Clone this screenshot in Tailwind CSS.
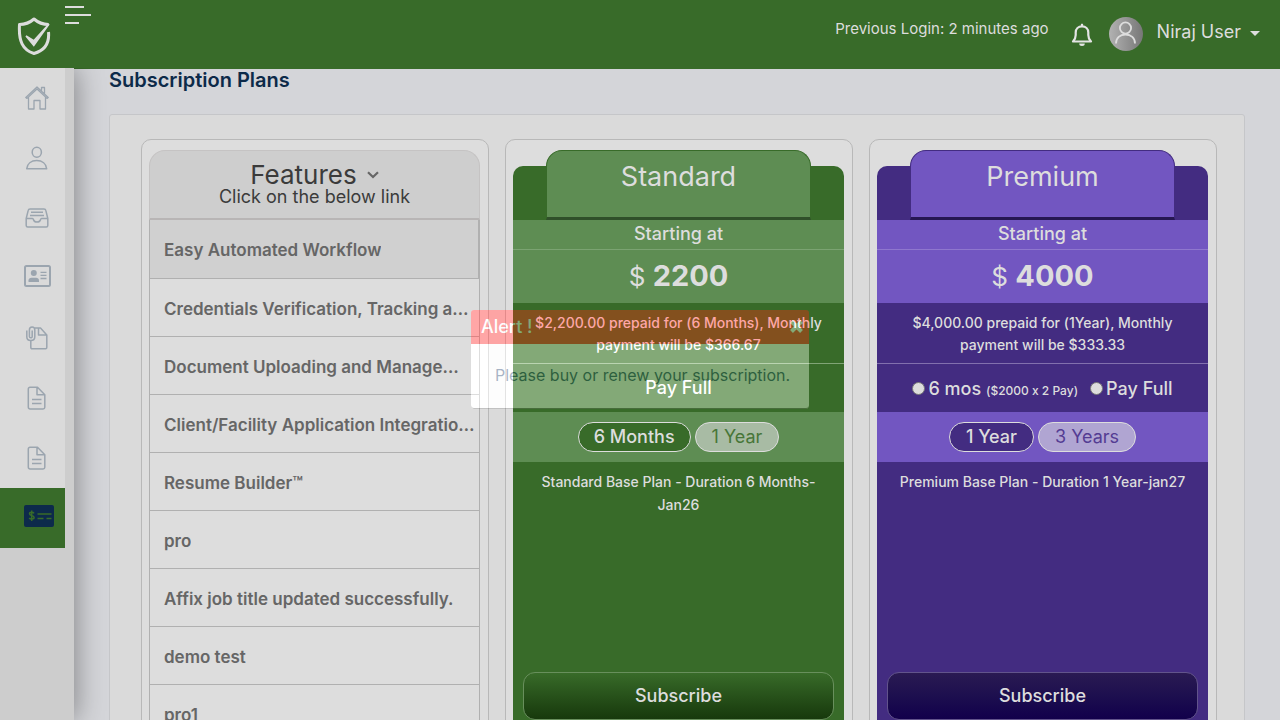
<!DOCTYPE html>
<html lang="en">
<head>
<meta charset="utf-8">
<meta name="viewport" content="width=device-width, initial-scale=1">
<title>Subscription Plans</title>
<script src="https://cdn.jsdelivr.net/npm/@tailwindcss/browser@4"></script>
</head>
<body class="h-screen overflow-hidden bg-[#d4d5d9] font-['Inter','Liberation_Sans',sans-serif] text-[#dddddd] [font-feature-settings:'calt'_0]">
<div class="flex h-full flex-col">

  <header class="flex h-[69px] shrink-0 items-start bg-[#386b29]">
    <a href="#" aria-label="Home" class="w-[65px] shrink-0 pl-[17px] pt-4">
      <svg class="h-10 w-[34px]" viewBox="0 0 34 40" fill="none" stroke="#dddddd">
        <path d="M31.500 16C32.500 27 28 34.500 17 37.500 5.500 34 1.500 25 2.500 8.500 9 8.500 13 6.500 17 3c4 3.500 8.500 5.500 14.500 5.500" stroke-width="3" stroke-linejoin="round"/>
        <path d="M9 20l7.800 9.500L32 8 16.800 24.800z" fill="#dddddd" stroke-width="1.600"/>
      </svg>
    </a>
    <button type="button" aria-label="Toggle menu" class="flex flex-col gap-1.5 pt-1.5">
      <span class="h-0.5 w-[19px] bg-[#dddddd]"></span>
      <span class="h-0.5 w-[26px] bg-[#dddddd]"></span>
      <span class="h-0.5 w-[14px] bg-[#dddddd]"></span>
    </button>
    <div class="ml-auto flex items-start pr-5">
      <span class="pt-[18px] text-[15px] leading-[22px]">Previous Login: 2 minutes ago</span>
      <button type="button" aria-label="Notifications" class="ml-[22px] pt-[23px]">
        <svg class="h-6 w-[22px]" viewBox="0 0 22 24" fill="none" stroke="#e4e4e4" stroke-width="2.200">
          <path d="M2 18.500h18c-2-2-2.700-3.500-2.700-6.500V9.500c0-3.700-2.700-6.200-6.300-6.200S4.700 5.800 4.700 9.500V12c0 3-.7 4.500-2.700 6.500z" stroke-linejoin="round"/>
          <path d="M11 .8v2.400"/><path d="M8.200 20.500h5.600a2.800 2.500 0 0 1-5.600 0z" fill="#e4e4e4" stroke="none"/>
        </svg>
      </button>
      <button type="button" class="ml-4 flex items-start">
        <svg class="mt-[17px] size-[34px]" viewBox="0 0 34 34" fill="none">
          <defs><linearGradient id="av"><stop stop-color="#b2b2b2"/><stop offset="1" stop-color="#777777"/></linearGradient></defs>
          <circle cx="17" cy="17" r="17" fill="url(#av)"/>
          <g stroke="#dddddd" stroke-width="1.800"><circle cx="16.500" cy="11" r="5.600"/><path d="M7 26.500c0-5.500 4-9 9.500-9s9.500 3.500 9.500 9"/></g>
        </svg>
        <span class="ml-[14px] mt-5 text-[18px] leading-6">Niraj User</span>
        <svg class="ml-[9px] mt-[31px] h-[5px] w-[10px]" viewBox="0 0 10 5"><path d="M0 0h10L5 5z" fill="#dddddd"/></svg>
      </button>
    </div>
  </header>

  <div class="flex min-h-0 flex-1">
    <nav aria-label="Main" class="relative z-10 -mt-px w-[74px] shrink-0 bg-[#cdcdcd] shadow-[2px_0_28px_rgba(0,0,0,0.38)] [clip-path:inset(0_-50px_0_0)]">
      <div class="w-[65px] bg-[#dadada] text-[#9ba5af]">
        <a href="#" aria-label="Dashboard" class="flex h-[60px] items-center pl-[25px]">
          <svg class="size-6" viewBox="0 0 24 24" fill="none" stroke="currentColor" stroke-width="1.300" stroke-linejoin="round"><path d="M.8 11.500 12 1l11.200 10.500-1.200.9L12 3 2 12.400zM3.500 11v12h5.500v-8.500h6V23h5.500V11M16.500 5V1.500h3V8"/></svg>
        </a>
        <a href="#" aria-label="Profile" class="flex h-[60px] items-center pl-[25px]">
          <svg class="size-6" viewBox="0 0 24 24" fill="none" stroke="currentColor" stroke-width="1.500" stroke-linejoin="round"><ellipse cx="11.800" cy="6.200" rx="4.600" ry="5"/><path d="M1.700 22.700c.5-5 4.500-8.200 10-8.200s9.500 3.200 10 8.200z"/></svg>
        </a>
        <a href="#" aria-label="Inbox" class="flex h-[60px] items-center pl-[25px]">
          <svg class="size-6" viewBox="0 0 24 24" fill="none" stroke="currentColor" stroke-width="1.500" stroke-linejoin="round"><path d="M1.200 12.500 3.200 4.400c.2-1 .8-1.500 1.800-1.500h14c1 0 1.600.5 1.800 1.500l2 8.100v7a1.500 1.500 0 0 1-1.500 1.500H2.700a1.500 1.500 0 0 1-1.500-1.500zM1.200 12.500h6.300c.6 0 .8.500 1 1.200.4 1.400 1.500 2.300 3.500 2.300s3.100-.9 3.500-2.300c.2-.7.4-1.200 1-1.200h6.300M6 6.300h12M5 9.400h14"/></svg>
        </a>
        <a href="#" aria-label="Credentials" class="flex h-[60px] items-center pb-1 pl-6">
          <svg class="h-[22px] w-[27px]" viewBox="0 0 27 22" fill="none" stroke="currentColor"><rect x="1" y="1" width="25" height="20" rx="1.500" stroke-width="2"/><g fill="currentColor" stroke="none"><circle cx="9.800" cy="8" r="3"/><path d="M4.500 17v-1.500c0-1.800 1.300-2.700 3-2.700h4.500c1.700 0 3 .9 3 2.700V17z"/></g><path d="M16.500 7.300h6M16.500 10.400h6M16.500 13.500h6" stroke-width="1.300"/></svg>
        </a>
        <a href="#" aria-label="Attachments" class="flex h-[60px] items-center pl-[25px]">
          <svg class="size-6" viewBox="0 0 24 24" fill="none" stroke="currentColor" stroke-width="1.500" stroke-linejoin="round"><path d="M9.500 2h6l6.300 7v12.500a1.200 1.200 0 0 1-1.200 1.200H7a1.200 1.200 0 0 1-1.200-1.200V15M13.500 2v7h8.200"/><path d="M1.800 4.500v6.300c0 5 8 5 8 0V4c0-4-5.400-4-5.400 0v6.500c0 1.800 2.800 1.800 2.800 0V4.500"/></svg>
        </a>
        <a href="#" aria-label="Documents" class="flex h-[60px] items-center pl-[25px]">
          <svg class="size-6" viewBox="0 0 24 24" fill="none" stroke="currentColor" stroke-width="1.500" stroke-linejoin="round"><path d="M5 1.200h7.500l7.300 7.500v12.500a1.700 1.700 0 0 1-1.700 1.700H5a1.700 1.700 0 0 1-1.700-1.700V2.900A1.700 1.700 0 0 1 5 1.200zM12 1.200v7.500h7.800M7 13.500h9.500M7 17.500h9.500"/></svg>
        </a>
        <a href="#" aria-label="Reports" class="flex h-[60px] items-center pl-[25px]">
          <svg class="size-6" viewBox="0 0 24 24" fill="none" stroke="currentColor" stroke-width="1.500" stroke-linejoin="round"><path d="M5 1.200h7.500l7.300 7.500v12.500a1.700 1.700 0 0 1-1.700 1.700H5a1.700 1.700 0 0 1-1.700-1.700V2.900A1.700 1.700 0 0 1 5 1.200zM12 1.200v7.500h7.800M7 13.500h9.500M7 17.500h9.500"/></svg>
        </a>
        <a href="#" aria-label="Subscription" aria-current="page" class="flex h-[60px] items-center bg-[#386b29] pb-1 pl-6">
          <svg class="h-[22px] w-[30px]" viewBox="0 0 30 22" fill="none" stroke="#386b29"><rect width="30" height="22" rx="2" fill="#0d2a4b" stroke="none"/><path d="M10 8.300C9.300 7 5.500 6.700 5.500 8.700c0 2.200 4.600 1.500 4.600 3.800 0 2-3.900 1.900-4.900.5M7.700 5.500v10.500" stroke-width="1.500"/><path d="M13.500 9H27.500M13.500 13.500h6M22.500 13.500h5" stroke-width="1.300"/></svg>
        </a>
      </div>
    </nav>

    <main class="min-w-0 flex-1 px-[35px]">
      <h1 class="text-[20px] font-semibold leading-[22px] text-[#0c2a49]">Subscription Plans</h1>
      <section class="mt-[23px] grid grid-cols-3 gap-4 rounded-[3px] border border-[#c5c6c9] bg-[#dadada] pb-6 pl-[31px] pr-[27px] pt-6">

        <div class="min-w-0 rounded-[10px] border border-[#b8b8b8] bg-[#dddddd] pb-6 pl-[7px] pr-2 pt-2.5">
          <button type="button" class="block h-[70px] w-full rounded-t-2xl border border-b-2 border-[#c5c3c3] border-b-[#b8b5b5] bg-[#cecece] text-center text-[#3b3b3b]">
            <span class="flex items-center justify-center gap-2.5 text-[26px] leading-6">Features
              <svg class="h-2 w-3" viewBox="0 0 12 8" fill="none" stroke="#666666" stroke-width="2.200"><path d="M1 1.200 6 6l5-4.800"/></svg>
            </span>
            <span class="block text-[18px] leading-5">Click on the below link</span>
          </button>
          <ul class="border-x border-[#b0b0b0] text-[17px] font-semibold text-[#666666]">
            <li class="flex h-[59px] items-center border-b border-r border-[#b0b0b0] bg-[#d0d0d0] pl-3.5 pt-1"><a href="#" class="truncate">Easy Automated Workflow</a></li>
            <li class="flex h-[58px] items-center border-b border-[#b0b0b0] pl-3.5 pt-1"><a href="#" class="truncate">Credentials Verification, Tracking a…</a></li>
            <li class="flex h-[58px] items-center border-b border-[#b0b0b0] pl-3.5 pt-1"><a href="#" class="truncate">Document Uploading and Manage…</a></li>
            <li class="flex h-[58px] items-center border-b border-[#b0b0b0] pl-3.5 pt-1"><a href="#" class="truncate">Client/Facility Application Integratio…</a></li>
            <li class="flex h-[58px] items-center border-b border-[#b0b0b0] pl-3.5 pt-1"><a href="#" class="truncate">Resume Builder™</a></li>
            <li class="flex h-[58px] items-center border-b border-[#b0b0b0] pl-3.5 pt-1"><a href="#" class="truncate">pro</a></li>
            <li class="flex h-[58px] items-center border-b border-[#b0b0b0] pl-3.5 pt-1"><a href="#" class="truncate">Affix job title updated successfully.</a></li>
            <li class="flex h-[58px] items-center border-b border-[#b0b0b0] pl-3.5 pt-1"><a href="#" class="truncate">demo test</a></li>
            <li class="flex h-[58px] items-center border-b border-[#b0b0b0] pl-3.5 pt-1"><a href="#" class="truncate">pro1</a></li>
          </ul>
        </div>

        <div class="min-w-0 rounded-[10px] border border-[#b8b8b8] bg-[#dddddd] pb-6 pl-[7px] pr-2 pt-[26px] text-center">
          <article class="flow-root rounded-[10px] bg-[#386b29] pb-4">
            <h2 class="mx-auto -mt-4 h-[70px] w-4/5 rounded-t-2xl border border-b-[3px] border-[#386b29] border-b-[#30502a] bg-[#5e8d53] pt-2 text-[27px] leading-9">Standard</h2>
            <p class="h-[30px] border-b border-[#7ba372] bg-[#5e8d53] text-[18px] font-medium leading-7">Starting at</p>
            <p class="h-[53px] bg-[#5e8d53] text-[26px] leading-[52px]">$ <strong class="text-[29px]">2200</strong></p>
            <p class="h-[61px] border-b border-[#81a476] px-5 pt-[9px] text-[14px] font-medium leading-[22px]">$2,200.00 prepaid for (6 Months), Monthly payment will be $366.67</p>
            <p class="h-12 text-[18px] font-medium leading-[48px]">Pay Full</p>
            <div class="flex h-[50px] items-center justify-center gap-1 bg-[#5e8d53] text-[18px]">
              <button type="button" class="h-[30px] rounded-full border border-[#dddddd] bg-[#386b29] px-[15px] font-medium leading-7">6 Months</button>
              <button type="button" class="h-[30px] rounded-full border border-[#dddddd] bg-[#a8bba4] px-4 leading-7 text-[#477638]">1 Year</button>
            </div>
            <p class="min-h-[210px] px-6 pt-2 text-[14px] font-medium leading-[23px]">Standard Base Plan - Duration 6 Months-Jan26</p>
            <div class="px-2.5"><button type="button" class="h-12 w-full rounded-xl border border-[#688f5c] bg-linear-to-b from-[#386b29] to-[#17390c] pb-0.5 text-[18px] font-medium">Subscribe</button></div>
          </article>
        </div>

        <div class="min-w-0 rounded-[10px] border border-[#b8b8b8] bg-[#dddddd] pb-6 pl-[7px] pr-2 pt-[26px] text-center">
          <article class="flow-root rounded-[10px] bg-[#432c81] pb-4">
            <h2 class="mx-auto -mt-4 h-[70px] w-4/5 rounded-t-2xl border border-b-[3px] border-[#432c81] border-b-[#261752] bg-[#7256c1] pt-2 text-[27px] leading-9">Premium</h2>
            <p class="h-[30px] border-b border-[#8f77ce] bg-[#7256c1] text-[18px] font-medium leading-7">Starting at</p>
            <p class="h-[53px] bg-[#7256c1] text-[26px] leading-[52px]">$ <strong class="text-[29px]">4000</strong></p>
            <p class="h-[61px] border-b border-[#8270ae] px-5 pt-[9px] text-[14px] font-medium leading-[22px]">$4,000.00 prepaid for (1Year), Monthly<br>payment will be $333.33</p>
            <div class="flex h-12 items-center justify-center gap-3 whitespace-nowrap text-[18px] font-medium">
              <label class="flex items-center gap-[3px]"><input type="radio" name="premium-pay" class="size-[13px] appearance-none rounded-full border border-[#777777] bg-[#dddddd]"><span>6 mos <small class="text-[12px]">($2000 x 2 Pay)</small></span></label>
              <label class="flex items-center gap-[3px]"><input type="radio" name="premium-pay" class="size-[13px] appearance-none rounded-full border border-[#777777] bg-[#dddddd]"><span>Pay Full</span></label>
            </div>
            <div class="flex h-[50px] items-center justify-center gap-1 bg-[#7256c1] text-[18px]">
              <button type="button" class="h-[30px] rounded-full border border-[#dddddd] bg-[#432c81] px-4 font-medium leading-7">1 Year</button>
              <button type="button" class="h-[30px] rounded-full border border-[#dddddd] bg-[#b0a5d2] px-4 leading-7 text-[#543c93]">3 Years</button>
            </div>
            <p class="min-h-[210px] px-5 pt-2 text-[14px] font-medium leading-[23px]">Premium Base Plan - Duration 1 Year-jan27</p>
            <div class="px-2.5"><button type="button" class="h-12 w-full rounded-xl border border-[#62548b] bg-linear-to-b from-[#2a1a52] to-[#12004b] pb-0.5 text-[18px] font-medium">Subscribe</button></div>
          </article>
        </div>
      </section>
    </main>
  </div>
</div>

<div role="alertdialog" aria-labelledby="alert-title" class="fixed inset-x-0 top-[310px] z-20 mx-auto w-[338px] overflow-hidden rounded-[3px] backdrop-brightness-[1.155]">
  <div class="rounded-[3px] bg-white opacity-35 shadow-[inset_0_-1px_0_#555555]">
    <div class="flex h-[34px] items-center justify-between bg-[#ff0000] pb-0.5 pl-2.5 pr-1.5 text-white">
      <h2 id="alert-title" class="text-[18px] font-medium">Alert !</h2>
      <button type="button" aria-label="Close" class="text-white">
        <svg class="size-[13px]" viewBox="0 0 13 13" stroke="currentColor" stroke-width="4"><path d="M1.500 1.500l10 10M11.500 1.500l-10 10"/></svg>
      </button>
    </div>
    <p class="h-[65px] whitespace-nowrap pl-6 pt-[19px] text-[16px] leading-6 text-[#082d60]">Please buy or renew your subscription.</p>
  </div>
</div>
</body>
</html>
